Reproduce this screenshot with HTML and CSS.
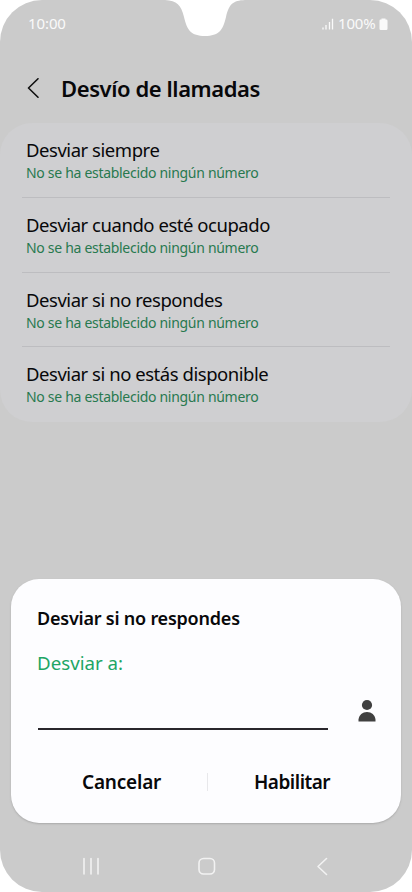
FILE: index.html
```
<!DOCTYPE html>
<html lang="es">
<head>
<meta charset="utf-8">
<meta name="viewport" content="width=device-width, initial-scale=1">
<title>Desvío de llamadas</title>
<link rel="stylesheet" href="styles.css">
</head>
<body>
<div class="phone">
  <svg class="notch" width="80" height="37" viewBox="0 0 80 37"><path d="M0 0C12 .5 16 5 19 17C22 30 26 36 40 36S58 30 61 17C64 4 68 .5 80 0Z" fill="#fff"/></svg>
  <header class="status">
    <span class="clock">10:00</span>
    <svg class="signal" width="12" height="12" viewBox="0 0 12 12"><path d="M1 9.500V11.500M4 7V11.500M7.500 4V11.500M10.500 .8V11.500" stroke="#fafafa" stroke-width="1.300" fill="none"/></svg>
    <span class="percent">100%</span>
    <svg class="battery" width="9" height="13" viewBox="0 0 9 13"><path d="M2.500 1.500V.5H6.500V1.500H7.300Q8.500 1.500 8.500 2.700V10.800Q8.500 12 7.300 12H1.700Q.5 12 .5 10.800V2.700Q.5 1.500 1.700 1.500Z" fill="#fafafa"/></svg>
  </header>
  <div class="heading">
    <svg class="back" width="12" height="20" viewBox="0 0 12 20"><path d="M11 .8L1.500 10L11 19.200" fill="none" stroke="#111" stroke-width="1.600" stroke-linecap="round" stroke-linejoin="round"/></svg>
    <h1>Desvío de llamadas</h1>
  </div>
  <ul class="list">
    <li><span class="name">Desviar siempre</span><span class="sub">No se ha establecido ningún número</span></li>
    <li><span class="name">Desviar cuando esté ocupado</span><span class="sub">No se ha establecido ningún número</span></li>
    <li><span class="name">Desviar si no respondes</span><span class="sub">No se ha establecido ningún número</span></li>
    <li><span class="name">Desviar si no estás disponible</span><span class="sub">No se ha establecido ningún número</span></li>
  </ul>
  <section class="dialog">
    <h2>Desviar si no respondes</h2>
    <label>Desviar a:</label>
    <div class="entry">
      <div class="field"></div>
      <svg class="person" width="18" height="24" viewBox="0 0 18 24"><circle cx="9" cy="6" r="5.100" fill="#404040"/><path d="M.5 22.500V20.500C1 16 4.500 13 9 13S17 16 17.500 20.500V22.500Z" fill="#404040"/></svg>
    </div>
    <div class="actions">
      <span class="cancel">Cancelar</span><i></i><span class="enable">Habilitar</span>
    </div>
  </section>
  <nav class="nav">
    <svg width="18" height="20" viewBox="0 0 18 20"><path d="M2 2.500V18M9 2.500V18M16 2.500V18"/></svg>
    <svg width="18" height="20" viewBox="0 0 18 20"><rect x="1" y="2.500" width="15.500" height="15.500" rx="4.500"/></svg>
    <svg width="18" height="20" viewBox="0 0 18 20"><path d="M13.500 2.500L5 10.500L13.500 18.500"/></svg>
  </nav>
</div>
</body>
</html>
```
FILE: styles.css
```
* { box-sizing: border-box; }
body { margin: 0; background: #fff; font-family: "Noto Sans", sans-serif; color: #08080a; }
.phone { position: relative; width: 412px; height: 892px; overflow: hidden; background: #cbcbcb; border-radius: 42px; display: flex; flex-direction: column; white-space: nowrap; }
.notch { position: absolute; left: 165px; top: 0; }
.status { height: 47px; padding: 0 24px 0 28px; display: flex; align-items: center; color: #fafafa; font-size: 15px; letter-spacing: -.1px; }
.clock { margin: -2px auto 0 0; }
.signal { margin-right: 4px; }
.percent { width: 40px; margin-top: -2px; letter-spacing: -.2px; }
.battery { margin: 2px 0 0 1px; }
.heading { height: 76px; padding: 6px 0 0 27px; display: flex; align-items: center; gap: 22px; }
h1 { margin: 0; font-size: 22px; line-height: 30px; font-weight: 600; letter-spacing: -.42px; }
.list { list-style: none; margin: 0; padding: 0 22px; height: 299px; border-radius: 32px; background: #cfcfd1; }
li { height: 74.8px; padding: 14px 4px 0; border-bottom: 1px solid #bdbdc0; display: flex; flex-direction: column; }
li:last-child { border: 0; }
.name { margin-bottom: 1px; font-size: 18.5px; line-height: 25px; letter-spacing: -.46px; }
.sub { font-size: 14px; line-height: 20px; letter-spacing: -.3px; color: #28794f; }
.dialog { width: 390px; height: 244px; margin: 157px 0 0 11px; padding: 26px 25px 0 26px; border-radius: 28px; background: #fdfdff; box-shadow: 0 1px 2px #aaa; display: flex; flex-direction: column; }
h2 { margin: 0; font-size: 18px; line-height: 26px; font-weight: 600; letter-spacing: -.22px; }
label { margin-top: 19px; font-size: 18.7px; line-height: 26px; color: #20a565; }
.entry { height: 54px; display: flex; justify-content: space-between; align-items: flex-end; }
.field { width: 290px; height: 30px; margin-left: 1px; border-bottom: 2px solid #29272c; }
.person { margin-bottom: 7px; }
.actions { display: flex; align-items: center; margin-top: 38px; height: 28px; font-size: 19px; font-weight: 600; }
.actions i { width: 1px; height: 18px; background: #e8e8eb; }
.cancel { width: 170px; padding-left: 45px; letter-spacing: -.2px; }
.enable { padding-left: 46px; letter-spacing: -.5px; }
.nav { padding: 33px 81px 0 82px; display: flex; justify-content: space-between; }
.nav svg { fill: none; stroke: #f2f2f2; stroke-width: 1.600; stroke-linecap: round; stroke-linejoin: round; }
```
